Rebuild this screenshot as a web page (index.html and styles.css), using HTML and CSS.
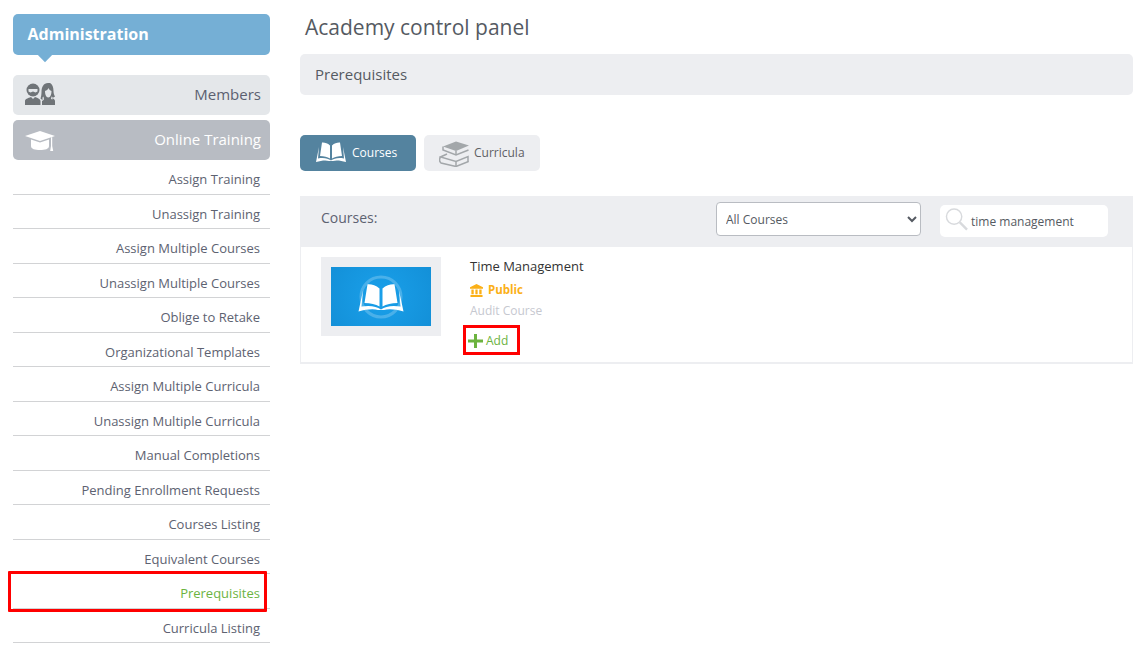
FILE: index.html
```html
<!DOCTYPE html>
<html lang="en">
<head>
<meta charset="utf-8">
<title>Academy control panel</title>
<link rel="stylesheet" href="styles.css">
</head>
<body>
<div class="page">
  <aside class="sidebar">
    <div class="admin-head">Administration</div>
    <div class="cat cat-members">
      <svg class="cat-icon" viewBox="0 0 30 22">
        <path fill="#6f7478" d="M0 22v-4c0-2 3-3 6-4l2 2 2-2c3 1 5.500 2 5.500 4v4z"/>
        <circle cx="8" cy="7" r="6.500" fill="#6f7478"/>
        <path fill="#e4e7ea" d="M3.500 6h9v2.500L10.500 9.500 8 8.500 5.500 9.500 3.500 8.500z"/>
        <path fill="#6f7478" d="M23 0c-4.500 0-6.500 4-6.500 9 0 3-.5 5-1 6.500 1 1 2 1.500 3 1.500L17 18v4h13v-4c0-1.500-1.500-2.200-3-3 1.500-.5 2.500-1 3-1.500-1-1.500-1.500-3.500-1.500-5.500 0-5-2-8.500-5.500-8.500z"/>
        <path fill="#e4e7ea" d="M20 8c1.500-.5 3-1.500 3.500-3 .7 1.500 1.500 2.500 3 3 0 3.500-1 6.500-3.200 6.500S20 11.500 20 8z"/>
        <path fill="#e4e7ea" d="M17.500 14.500l1-1 .5 3-1.500 1zM27.500 14l-1-.5-.5 2.500 1.500.5z"/>
      </svg>
      <span>Members</span>
    </div>
    <div class="cat cat-training">
      <svg class="cat-icon" viewBox="0 -4 30 24">
        <path fill="#fff" d="M15 0l15 5-15 5L0 5z"/>
        <path fill="#fff" d="M6 8.500l9 3 9-3V15c0 3-4 4-9 4s-9-1-9-4z"/>
        <path fill="#fff" d="M26 6.500l1.200-.5v9l1 5h-3l.8-5z"/>
      </svg>
      <span>Online Training</span>
    </div>
    <nav class="menu">
      <a class="menu-item">Assign Training</a>
      <a class="menu-item">Unassign Training</a>
      <a class="menu-item">Assign Multiple Courses</a>
      <a class="menu-item">Unassign Multiple Courses</a>
      <a class="menu-item">Oblige to Retake</a>
      <a class="menu-item">Organizational Templates</a>
      <a class="menu-item">Assign Multiple Curricula</a>
      <a class="menu-item">Unassign Multiple Curricula</a>
      <a class="menu-item">Manual Completions</a>
      <a class="menu-item">Pending Enrollment Requests</a>
      <a class="menu-item">Courses Listing</a>
      <a class="menu-item">Equivalent Courses</a>
      <a class="menu-item active">Prerequisites<span class="mark mark-side"></span></a>
      <a class="menu-item">Curricula Listing</a>
    </nav>
  </aside>
  <main class="main">
    <h1 class="title">Academy control panel</h1>
    <div class="crumb">Prerequisites</div>
    <div class="tabs">
      <div class="tab tab-on">
        <svg class="tab-icon" viewBox="0 0 30 20">
          <path fill="#fff" d="M14 3.500C11.500 1 8.500.3 6 .5L4 14c4 0 7.500 1 10 2.500zM16 3.500C18.500 1 21.500.3 24 .5L26 14c-4 0-7.500 1-10 2.500z"/>
          <path fill="#fff" d="M3 5 0 20c5-1.500 10-2 13-1h4c3-1 8-.5 13 1L27 5l1 11.500c-6-1-10 0-13 2-3-2-7-3-13-2z"/>
        </svg>
        <span>Courses</span>
      </div>
      <div class="tab tab-off">
        <svg class="tab-icon tab-icon-books" viewBox="0 0 30 26">
          <path fill="#a3a7aa" d="M4 5.500 17 .5l13 4-13 5.500z"/>
          <g fill="none" stroke="#a3a7aa" stroke-width="1.500">
            <path d="M4 5.500V9l13 5 12.500-5"/>
            <path d="M17 10v4"/>
            <path d="M8 13 1.500 16 17 20.500 29 15.500V21"/>
            <path d="M1.500 16c-1.200 2-1.200 4.500.5 6L17 25.500 29.500 20.500"/>
            <path d="M17 20.500v5"/>
          </g>
        </svg>
        <span>Curricula</span>
      </div>
    </div>
    <section class="panel">
      <header class="panel-head">
        <span class="panel-label">Courses:</span>
        <select class="filter"><option>All Courses</option></select>
        <div class="search">
          <svg class="search-icon" viewBox="0 0 24 24"><circle cx="9.500" cy="9.500" r="8" fill="none" stroke="#d8dadd" stroke-width="1.500"/><path d="M15.500 15.500 23 23" stroke="#d8dadd" stroke-width="2.500" fill="none"/></svg>
          <span>time management</span>
        </div>
      </header>
      <div class="row">
        <div class="thumb">
          <div class="thumb-img">
            <svg class="thumb-svg" viewBox="0 0 50 50">
              <circle cx="25" cy="25" r="20" fill="none" stroke="#fff" stroke-opacity=".22" stroke-width="3"/>
              <g transform="translate(2.500 11.500) scale(1.500 1.400)">
                <path fill="#fff" d="M14 3.500C11.500 1 8.500.3 6 .5L4 14c4 0 7.500 1 10 2.500zM16 3.500C18.500 1 21.500.3 24 .5L26 14c-4 0-7.500 1-10 2.500z"/>
                <path fill="#fff" d="M3 5 0 20c5-1.500 10-2 13-1h4c3-1 8-.5 13 1L27 5l1 11.500c-6-1-10 0-13 2-3-2-7-3-13-2z"/>
              </g>
            </svg>
          </div>
        </div>
        <div class="info">
          <div class="name">Time Management</div>
          <div class="public">
            <svg class="bank" viewBox="0 0 14 14"><path fill="#fbb017" d="M7 0 14 3.500V5H0V3.500zM1.500 6H4v5H1.500zM5.800 6h2.400v5H5.800zM10 6h2.500v5H10zM.5 11.800h13V14H.500z"/></svg>
            <span>Public</span>
          </div>
          <div class="kind">Audit Course</div>
          <div class="add">
            <svg class="plus" viewBox="0 0 15 14"><path fill="#6cb33f" d="M6 0h3v5.500h6v3H9V14H6V8.500H0v-3h6z"/></svg>
            <span>Add</span>
            <span class="mark mark-add"></span>
          </div>
        </div>
      </div>
    </section>
  </main>
</div>
</body>
</html>
```
FILE: styles.css
```css
* { box-sizing: border-box; }
html, body { margin: 0; padding: 0; height: 654px; overflow: hidden; background: #fff; }
body { font-family: "Open Sans", "Liberation Sans", sans-serif; color: #555a66; }
.page { display: flex; align-items: flex-start; padding: 14px 8px 0 13px; gap: 30px; }

.sidebar { width: 257px; flex: none; }
.admin-head {
  position: relative; height: 41px; line-height: 40px; padding-left: 14.500px;
  background: #75afd5; color: #fff; font-weight: 700; font-size: 16px; border-radius: 5px;
  margin-bottom: 20px;
}
.admin-head::after {
  content: ""; position: absolute; left: 25px; bottom: -7px; width: 14px; height: 14px;
  background: #75afd5; transform: rotate(45deg) scale(.72);
}
.cat {
  display: flex; align-items: center; justify-content: space-between;
  height: 40px; padding: 0 9px 2px 12px; border-radius: 5px; font-size: 15px; margin-bottom: 5px;
}
.cat-members { background: #e4e7ea; color: #5b6070; }
.cat-training { background: #b8bcc3; color: #fff; margin-bottom: 0; }
.cat-icon { width: 30px; height: 22px; }
.cat-training .cat-icon { height: 24px; }

.menu { display: flex; flex-direction: column; }
.menu-item {
  position: relative; display: block; height: 34.500px; line-height: 20px; padding: 9px 10px 0 0;
  text-align: right; font-size: 13px; color: #5d6271; border-bottom: 1px solid #d2d3d5;
}
.menu-item.active { color: #6cb33f; }
.mark { position: absolute; border: 3px solid #f00; pointer-events: none; }
.mark-side { left: -5px; right: 3px; top: -3px; height: 41px; border-radius: 1px; }

.main { flex: 1; min-width: 0; }
.title { margin: 0; padding-left: 5px; font-size: 21px; font-weight: 400; line-height: 26px; color: #555a62; height: 40px; }
.crumb {
  height: 41px; line-height: 41px; padding-left: 15px; background: #edeef1;
  border-radius: 5px; font-size: 15px; color: #555a62; margin-bottom: 40px;
}
.tabs { display: flex; gap: 8px; margin-bottom: 25px; }
.tab {
  display: flex; align-items: center; width: 116px; height: 36px; border-radius: 5px;
  font-size: 12px; padding: 0 0 2px 16px; gap: 6px;
}
.tab-on { background: #54839f; color: #fff; }
.tab-off { background: #edeef1; color: #5d6065; padding-left: 15px; gap: 5px; }
.tab-icon { width: 30px; height: 20px; flex: none; }
.tab-icon-books { height: 26px; margin-top: 4px; }

.panel-head { display: flex; align-items: center; height: 51px; background: #edeef1; padding-left: 21px; }
.panel-label { font-size: 14px; color: #5d6271; width: 395px; position: relative; top: -4px; }
.filter {
  width: 205px; height: 34px; padding-left: 5px; font-family: inherit; font-size: 12px; color: #555a62;
  background: #fff; border: 1px solid #b9bcc2; border-radius: 4px; margin-top: -5px;
}
.search {
  display: flex; align-items: center; gap: 3px; width: 168px; height: 32px; margin-left: 19px; margin-top: -1px;
  padding-left: 5px; background: #fff; border-radius: 5px; font-size: 12px; color: #555a62;
}
.search-icon { width: 23px; height: 24px; flex: none; margin-top: -4px; }

.row {
  display: flex; height: 117px; padding: 10px 0 0 20px; gap: 29px;
  border: 1px solid #edeef1; border-top: 0; border-bottom-width: 2px;
}
.thumb { display: flex; align-items: center; justify-content: center; width: 120px; height: 79px; background: #edeef1; }
.thumb-img {
  display: flex; align-items: center; justify-content: center; width: 100px; height: 59px;
  background: radial-gradient(circle at 50% 50%, #1aa0ea 0%, #1390d8 100%);
}
.thumb-svg { width: 50px; height: 50px; }
.info { display: flex; flex-direction: column; align-items: flex-start; margin-top: -1px; }
.name { font-size: 13px; line-height: 20px; color: #333; }
.public { display: flex; align-items: center; gap: 5px; font-size: 11.500px; font-weight: 700; color: #fbb017; line-height: 24px; margin-top: 2px; }
.bank { width: 13px; height: 13px; }
.kind { font-size: 12px; line-height: 20px; color: #c6c8d0; margin-top: -1px; }
.add { position: relative; display: flex; align-items: center; gap: 3px; height: 20px; margin: 9px 0 0 -2px; font-size: 12px; color: #6cb33f; }
.plus { width: 15px; height: 14px; margin-top: 2px; }
.mark-add { left: -5px; top: -5px; width: 57px; height: 30px; }
```
